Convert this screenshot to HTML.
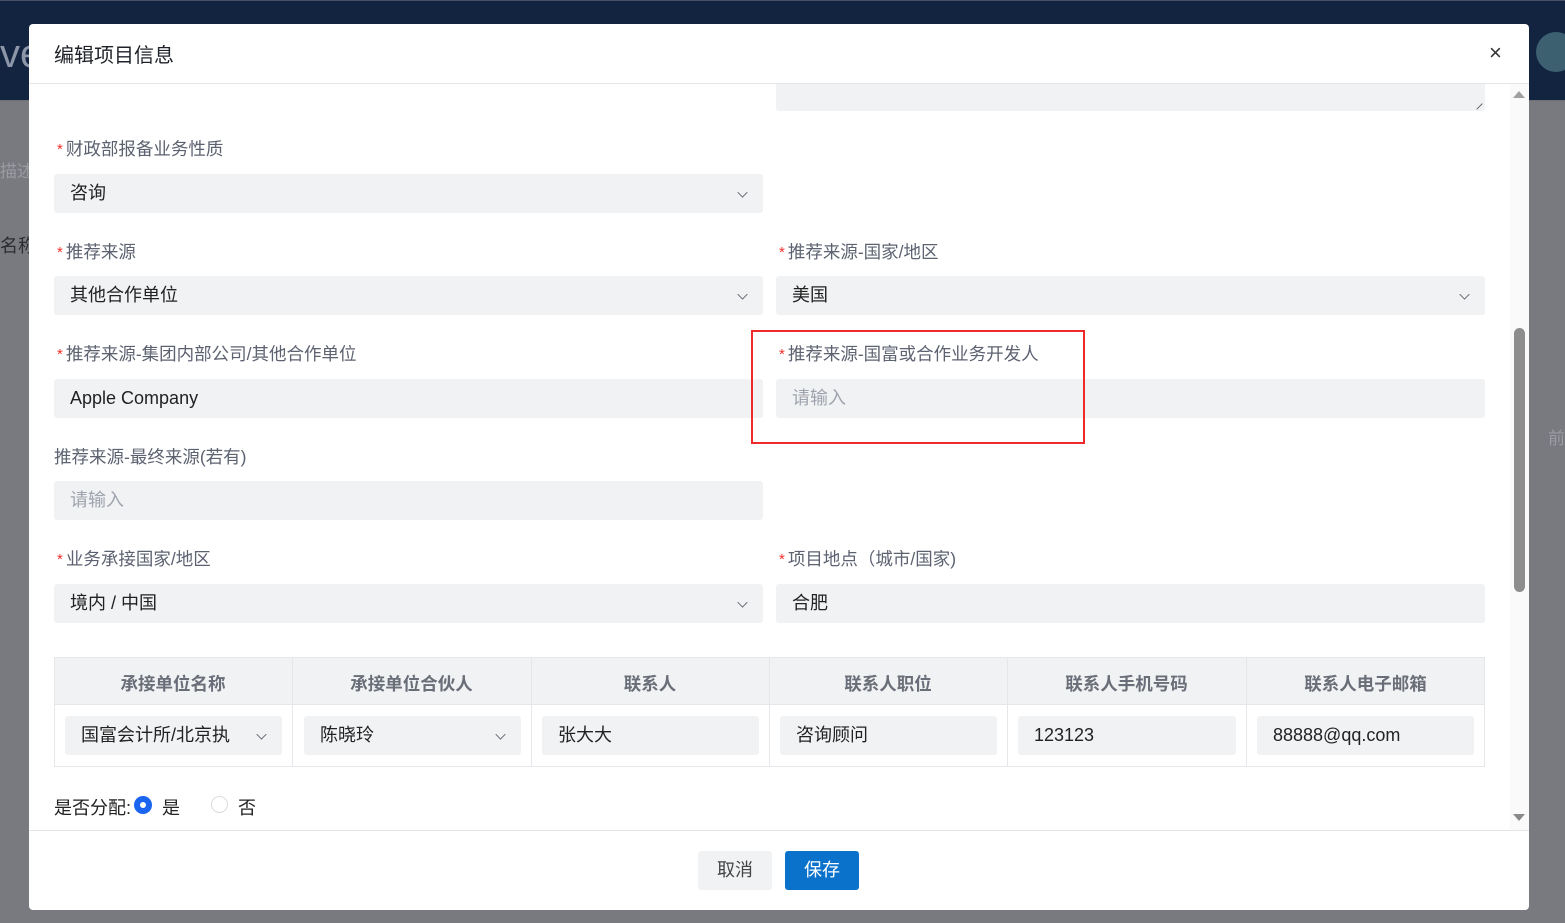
<!DOCTYPE html>
<html><head><meta charset="utf-8"><style>
*{margin:0;padding:0;box-sizing:border-box}
body{width:1565px;height:923px;position:relative;overflow:hidden;background:#787a80;font-family:"Liberation Sans","Noto Sans CJK SC",sans-serif}
.a{position:absolute}
.nav{left:0;top:0;width:1565px;height:100px;background:#132441;border-top:1px solid #4a5366}
.modal{left:29px;top:24px;width:1500px;height:886px;background:#fff;border-radius:4px;overflow:hidden}
.lbl{font-size:17.5px;color:#5d6271;white-space:nowrap}
.lbl b{color:#f0302a;font-weight:normal;font-size:15px;margin-left:3px;margin-right:3px;position:relative;top:-1px}
.inp{background:#f1f2f4;border-radius:3px;height:39px;font-size:18px;color:#222;padding-left:16px;line-height:39px;white-space:nowrap;overflow:hidden}
.ph{color:#9ea3ad}
.chev{position:absolute;right:16px;top:14px;width:9px;height:9px;border-right:1.5px solid #555a66;border-bottom:1.5px solid #555a66;transform:rotate(45deg) scale(0.8)}
.th{font-size:17.5px;font-weight:bold;color:#6a6e78;text-align:center;line-height:48px}
</style></head><body>
<div class="a nav"></div>
<div class="a" style="left:0;top:32px;font-size:40px;color:#8d96a8;font-family:'Liberation Sans';">ve</div>
<div class="a" style="left:1536px;top:32px;width:40px;height:40px;border-radius:50%;background:#3d6070"></div>
<div class="a" style="left:0;top:100px;width:1565px;height:1px;background:#6e7076"></div>
<div class="a" style="left:0;top:157px;font-size:17px;color:#9a9ca2">描述</div>
<div class="a" style="left:0;top:232px;font-size:18px;color:#2a2c30">名称</div>
<div class="a" style="left:1548px;top:424px;font-size:17px;color:#9a9ca2">前</div>

<div class="a modal">
  <div class="a" style="left:25px;top:15px;font-size:20px;color:#1f2329">编辑项目信息</div>
  <div class="a" style="left:1460px;top:16px;font-size:22px;color:#333">×</div>
  <div class="a" style="left:0;top:59px;width:1500px;height:1px;background:#e4e5e8"></div>

  <div class="a" style="left:747px;top:60px;width:709px;height:27px;background:#f1f2f4;border-radius:0 0 3px 3px"></div>
  <div class="a" style="left:1444px;top:76px;width:8px;height:8px;border-right:1px solid #666;transform:rotate(45deg)"></div>

  <div class="a lbl" style="left:25px;top:112px"><b>*</b>财政部报备业务性质</div>
  <div class="a inp" style="left:25px;top:150px;width:709px">咨询<span class="chev"></span></div>

  <div class="a lbl" style="left:25px;top:215px"><b>*</b>推荐来源</div>
  <div class="a inp" style="left:25px;top:252px;width:709px">其他合作单位<span class="chev"></span></div>
  <div class="a lbl" style="left:747px;top:215px"><b>*</b>推荐来源-国家/地区</div>
  <div class="a inp" style="left:747px;top:252px;width:709px">美国<span class="chev"></span></div>

  <div class="a lbl" style="left:25px;top:317px"><b>*</b>推荐来源-集团内部公司/其他合作单位</div>
  <div class="a inp" style="left:25px;top:355px;width:709px">Apple Company</div>
  <div class="a lbl" style="left:747px;top:317px"><b>*</b>推荐来源-国富或合作业务开发人</div>
  <div class="a inp ph" style="left:747px;top:355px;width:709px">请输入</div>
  <div class="a" style="left:722px;top:306px;width:334px;height:114px;border:2px solid #f02a2a"></div>

  <div class="a lbl" style="left:25px;top:420px">推荐来源-最终来源(若有)</div>
  <div class="a inp ph" style="left:25px;top:457px;width:709px">请输入</div>

  <div class="a lbl" style="left:25px;top:522px"><b>*</b>业务承接国家/地区</div>
  <div class="a inp" style="left:25px;top:560px;width:709px">境内 / 中国<span class="chev"></span></div>
  <div class="a lbl" style="left:747px;top:522px"><b>*</b>项目地点（城市/国家)</div>
  <div class="a inp" style="left:747px;top:560px;width:709px">合肥</div>

  <div class="a" style="left:25px;top:633px;width:1431px;height:110px;border:1px solid #e6e7ea"></div>
  <div class="a" style="left:26px;top:634px;width:1429px;height:47px;background:#f1f2f4;border-bottom:1px solid #e6e7ea"></div>
  <div class="a th" style="left:25px;top:636px;width:238px">承接单位名称</div>
  <div class="a th" style="left:263px;top:636px;width:239px">承接单位合伙人</div>
  <div class="a th" style="left:502px;top:636px;width:238px">联系人</div>
  <div class="a th" style="left:740px;top:636px;width:238px">联系人职位</div>
  <div class="a th" style="left:978px;top:636px;width:239px">联系人手机号码</div>
  <div class="a th" style="left:1217px;top:636px;width:239px">联系人电子邮箱</div>
  <div class="a" style="left:263px;top:633px;width:1px;height:110px;background:#e6e7ea"></div>
  <div class="a" style="left:502px;top:633px;width:1px;height:110px;background:#e6e7ea"></div>
  <div class="a" style="left:740px;top:633px;width:1px;height:110px;background:#e6e7ea"></div>
  <div class="a" style="left:978px;top:633px;width:1px;height:110px;background:#e6e7ea"></div>
  <div class="a" style="left:1217px;top:633px;width:1px;height:110px;background:#e6e7ea"></div>
  <div class="a inp" style="left:36px;top:692px;width:217px;padding-right:40px">国富会计所/北京执<span class="chev"></span></div>
  <div class="a inp" style="left:275px;top:692px;width:217px">陈晓玲<span class="chev"></span></div>
  <div class="a inp" style="left:513px;top:692px;width:217px">张大大</div>
  <div class="a inp" style="left:751px;top:692px;width:217px">咨询顾问</div>
  <div class="a inp" style="left:989px;top:692px;width:218px">123123</div>
  <div class="a inp" style="left:1228px;top:692px;width:217px">88888@qq.com</div>

  <div class="a" style="left:25px;top:770px;font-size:18px;color:#222">是否分配:</div>
  <div class="a" style="left:105px;top:772px;width:18px;height:18px;border-radius:50%;background:#1a64f0"></div>
  <div class="a" style="left:111px;top:778px;width:6px;height:6px;border-radius:50%;background:#fff"></div>
  <div class="a" style="left:133px;top:770px;font-size:18px;color:#222">是</div>
  <div class="a" style="left:182px;top:772px;width:17px;height:17px;border-radius:50%;border:1.5px solid #d9dbe0"></div>
  <div class="a" style="left:209px;top:770px;font-size:18px;color:#222">否</div>

  <div class="a" style="left:1481px;top:60px;width:19px;height:746px;background:#fafafa"></div>
  <div class="a" style="left:1484px;top:67px;width:0;height:0;border-left:6px solid transparent;border-right:6px solid transparent;border-bottom:7px solid #a0a0a0"></div>
  <div class="a" style="left:1484px;top:790px;width:0;height:0;border-left:6px solid transparent;border-right:6px solid transparent;border-top:7px solid #8a8a8a"></div>
  <div class="a" style="left:1485px;top:304px;width:11px;height:264px;border-radius:6px;background:#8d8d8d"></div>

  <div class="a" style="left:0;top:806px;width:1500px;height:1px;background:#e4e5e8"></div>
  <div class="a" style="left:669px;top:827px;width:74px;height:39px;background:#f1f2f4;border-radius:3px;font-size:18px;color:#444;text-align:center;line-height:39px">取消</div>
  <div class="a" style="left:756px;top:827px;width:74px;height:39px;background:#0b72cc;border-radius:3px;font-size:18px;color:#fff;text-align:center;line-height:39px">保存</div>
</div>
</body></html>
